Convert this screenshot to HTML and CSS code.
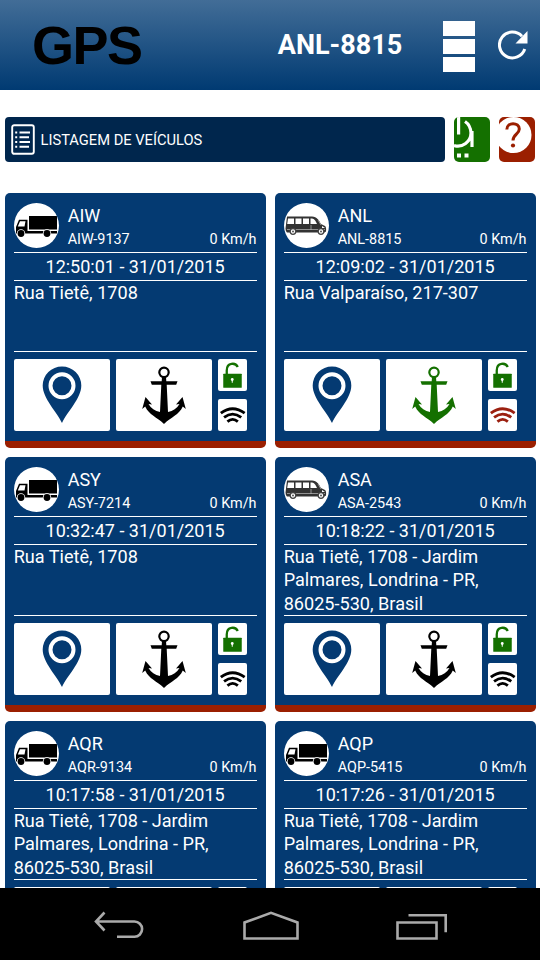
FILE: index.html
```html
<!DOCTYPE html>
<html lang="pt-BR">
<head>
<meta charset="utf-8">
<title>GPS</title>
<link rel="stylesheet" href="styles.css">
</head>
<body>
<svg class="sprites" aria-hidden="true">
  <symbol id="truck" viewBox="0 0 45 45">
    <path d="M15 13h28v13.500H15z"/>
    <path fill-rule="evenodd" d="M5 16.800h8.500V28H43v2.500H2V24zM6 18.300l-2.200 5.200h6.700l1-5.200z"/>
    <circle cx="7" cy="30.500" r="4.200" fill="#fff"/><circle cx="7" cy="30.500" r="3.400"/>
    <circle cx="33" cy="30.500" r="4.200" fill="#fff"/><circle cx="33" cy="30.500" r="3.400"/>
  </symbol>
  <symbol id="van" viewBox="0 0 45 45">
    <path fill="#333" d="M3 13.500h25c5 0 7 4 9 7.500l4 2q1.500 1 1 5.500l-1.500 1H3q-1.500-1-1.500-4z"/>
    <path fill="#fff" d="M4 15.500h6V21H3.200zM11.500 15.500h6V21h-6zM19 15.500h6V21h-6zM26.500 15.500c4 0 5 2 6.500 5.500h-6.500z"/>
    <path fill="none" stroke="#bbb" stroke-width=".7" d="M3 26.500h38M27 22v5M34 17l3 5"/>
    <path fill="#fff" d="M38 23l3 2h-3z"/>
    <g fill="#fff" stroke="#444" stroke-width="1.300"><circle cx="9" cy="28.500" r="2.800"/><circle cx="37" cy="28.500" r="2.800"/></g>
    <circle cx="9" cy="28.500" r="1" fill="#555"/><circle cx="37" cy="28.500" r="1" fill="#555"/>
  </symbol>
  <symbol id="pin" viewBox="0 0 40 58">
    <path d="M20 57C15 46 .7 32.500 .7 19.500a19.300 19 0 0 1 38.600 0C39.300 32.500 25 46 20 57z"/>
    <circle cx="20" cy="19.800" r="11.500" fill="none" stroke="#fff" stroke-width="4"/>
  </symbol>
  <symbol id="anchor" viewBox="0 0 44 58">
    <circle cx="22" cy="6.300" r="4.700" fill="none" stroke="currentColor" stroke-width="2.200"/>
    <path d="M20 11h4l.3 4.300H35.500l-1.300 3.500H24.700L26 46c5-1 9-3.500 11.500-8l-3.500 .5L40.500 31l3.300 12-3-2.500C37 49 29 51 22 58 15 51 7 49 3.200 40.500L.2 43 3.500 31l6.500 7.500-3.500-.5C9 42.500 13 45 18 46l1.300-27.200H9.800L8.500 15.300h11.200z"/>
  </symbol>
  <symbol id="lock" viewBox="0 0 29 32">
    <path fill="none" stroke="#147000" stroke-width="2.300" d="M8.500 16V11.500c0-8.500 9-8 11-3.500"/>
    <rect x="5" y="14.800" width="18.500" height="14" rx=".5" fill="#147000"/>
    <circle cx="14" cy="20.500" r="1.400" fill="#fff"/><path fill="#fff" d="M13.500 20.500h1v3.200h-1z"/>
  </symbol>
  <symbol id="wifi" viewBox="0 0 29 32">
    <g fill="none" stroke="currentColor" stroke-width="2.800"><path d="M2.600 14.200q11.700-9 23.800 0"/><path d="M5.800 18.400q8.500-6.500 17.200 0"/><path d="M9.200 22.600q5.200-4.500 10.400 0"/></g>
  </symbol>
</svg>
<div class="screen">
  <header class="topbar">
    <div class="logo">GPS</div>
    <div class="plate">ANL-8815</div>
    <div class="menu"><i></i><i></i><i></i></div>
    <svg class="reload" viewBox="0 0 30 30"><path fill="none" stroke="#fff" stroke-width="3" d="M26.800 19A13 12.900 0 1 1 24 6.200"/><path fill="#fff" d="M29.500 1v12.500H17.500z"/></svg>
  </header>
  <main class="content">
    <div class="toolbar">
      <div class="title">
        <svg viewBox="0 0 24 31"><rect x="1.200" y="1.200" width="21.600" height="28.600" rx="2" fill="none" stroke="#fff" stroke-width="1.900"/><path stroke="#fff" stroke-width="2" d="M4.200 8.500h2M8.500 8.500h10.500M4.200 13.200h2M8.500 13.200h9.500M4.200 18h2M8.500 18h10.500M4.200 22.700h2M8.500 22.700h9.500"/></svg>
        <span>LISTAGEM DE VEÍCULOS</span>
      </div>
      <div class="tool power"><svg viewBox="0 0 37 45"><path fill="none" stroke="#fff" stroke-width="3.200" d="M4.600 0v17.500M0 28.500A13.200 13.200 0 0 0 17 16Q16.500 8 11 4.500M18 14v16"/><path fill="#fff" d="M3 36.500h4v4H3zM10.500 36.500h4v4h-4z"/></svg></div>
      <div class="tool help"><svg viewBox="0 0 37 45"><circle cx="14.500" cy="18" r="18" fill="#fff"/><path fill="none" stroke="#9b1f00" stroke-width="3" d="M7.800 12.500c0-8 12.500-7.500 12.500-.5 0 5-6.300 5.500-6.300 11.500"/><circle cx="14" cy="28.500" r="2.100" fill="#9b1f00"/></svg></div>
    </div>
    <section class="grid">
      <article class="card">
        <div class="head"><svg class="avatar"><use href="#truck"/></svg><div class="ident"><div class="name">AIW</div><div class="sub"><span>AIW-9137</span><span>0 Km/h</span></div></div></div>
        <div class="time">12:50:01 - 31/01/2015</div>
        <div class="address">Rua Tietê, 1708</div>
        <div class="actions"><div class="big"><svg class="pin"><use href="#pin"/></svg></div><div class="big"><svg class="anchor"><use href="#anchor"/></svg></div><div class="small"><svg><use href="#lock"/></svg><svg><use href="#wifi"/></svg></div></div>
      </article>
      <article class="card">
        <div class="head"><svg class="avatar"><use href="#van"/></svg><div class="ident"><div class="name">ANL</div><div class="sub"><span>ANL-8815</span><span>0 Km/h</span></div></div></div>
        <div class="time">12:09:02 - 31/01/2015</div>
        <div class="address">Rua Valparaíso, 217-307</div>
        <div class="actions"><div class="big"><svg class="pin"><use href="#pin"/></svg></div><div class="big"><svg class="anchor green"><use href="#anchor"/></svg></div><div class="small"><svg><use href="#lock"/></svg><svg class="red"><use href="#wifi"/></svg></div></div>
      </article>
      <article class="card">
        <div class="head"><svg class="avatar"><use href="#truck"/></svg><div class="ident"><div class="name">ASY</div><div class="sub"><span>ASY-7214</span><span>0 Km/h</span></div></div></div>
        <div class="time">10:32:47 - 31/01/2015</div>
        <div class="address">Rua Tietê, 1708</div>
        <div class="actions"><div class="big"><svg class="pin"><use href="#pin"/></svg></div><div class="big"><svg class="anchor"><use href="#anchor"/></svg></div><div class="small"><svg><use href="#lock"/></svg><svg><use href="#wifi"/></svg></div></div>
      </article>
      <article class="card">
        <div class="head"><svg class="avatar"><use href="#van"/></svg><div class="ident"><div class="name">ASA</div><div class="sub"><span>ASA-2543</span><span>0 Km/h</span></div></div></div>
        <div class="time">10:18:22 - 31/01/2015</div>
        <div class="address">Rua Tietê, 1708 - Jardim<br>Palmares, Londrina - PR,<br>86025-530, Brasil</div>
        <div class="actions"><div class="big"><svg class="pin"><use href="#pin"/></svg></div><div class="big"><svg class="anchor"><use href="#anchor"/></svg></div><div class="small"><svg><use href="#lock"/></svg><svg><use href="#wifi"/></svg></div></div>
      </article>
      <article class="card">
        <div class="head"><svg class="avatar"><use href="#truck"/></svg><div class="ident"><div class="name">AQR</div><div class="sub"><span>AQR-9134</span><span>0 Km/h</span></div></div></div>
        <div class="time">10:17:58 - 31/01/2015</div>
        <div class="address">Rua Tietê, 1708 - Jardim<br>Palmares, Londrina - PR,<br>86025-530, Brasil</div>
        <div class="actions"><div class="big"></div><div class="big"></div><div class="small"><svg></svg></div></div>
      </article>
      <article class="card">
        <div class="head"><svg class="avatar"><use href="#truck"/></svg><div class="ident"><div class="name">AQP</div><div class="sub"><span>AQP-5415</span><span>0 Km/h</span></div></div></div>
        <div class="time">10:17:26 - 31/01/2015</div>
        <div class="address">Rua Tietê, 1708 - Jardim<br>Palmares, Londrina - PR,<br>86025-530, Brasil</div>
        <div class="actions"><div class="big"></div><div class="big"></div><div class="small"><svg></svg></div></div>
      </article>
    </section>
  </main>
  <nav class="navbar">
    <svg viewBox="0 0 52 30"><path d="M10.500 1.500L2 10.500l8.500 9M2 10.500h38.500a7.500 7.500 0 0 1 0 15.200H23"/></svg>
    <svg class="home" viewBox="0 0 56 30"><path d="M1.500 27.500V11.500L28 1.800l26.500 9.700v16z"/></svg>
    <svg viewBox="0 0 52 30"><path d="M1.500 11.500h39v16h-39zM12.500 4.300h37.200v17"/></svg>
  </nav>
</div>
</body>
</html>
```

FILE: styles.css
```css
* { box-sizing: border-box; }
body { margin: 0; background: #fff; font-family: Roboto, "Liberation Sans", sans-serif; color: #fff; }
.sprites { display: none; }
.screen { display: flex; flex-direction: column; width: 540px; height: 960px; overflow: hidden; }

.topbar { display: flex; flex: none; align-items: center; height: 90px; padding: 0 12px 0 32px; background: linear-gradient(#426d97, #003a72); }
.logo { width: 246px; padding-bottom: 1px; font: bold 54px/60px "Liberation Sans", sans-serif; letter-spacing: -1.5px; color: #000; }
.plate { width: 165px; font-size: 27px; font-weight: 700; white-space: nowrap; }
.menu { display: flex; flex-direction: column; gap: 3px; width: 32px; margin-top: 2px; }
.menu i { height: 15px; background: #fff; }
.reload { width: 30px; height: 30px; margin-left: 23.500px; }

.content { flex: 1; min-height: 0; overflow: hidden; padding: 27px 4.500px 0; }
.toolbar { display: flex; gap: 9px; height: 45px; }
.title { display: flex; align-items: center; width: 441px; padding-left: 6px; background: #00264d; border-radius: 4px; font-size: 14.700px; }
.title svg { width: 24px; height: 31px; margin-right: 6px; }
.tool { width: 36.500px; border-radius: 5px; overflow: hidden; }
.tool svg { display: block; width: 37px; height: 45px; }
.power { background: #147000; }
.help { background: #9b1f00; }

.grid { display: grid; grid-template-columns: 261px 261px; column-gap: 9px; row-gap: 9px; margin-top: 31.400px; }
.card { height: 255px; padding: 9.600px 9px 0 9.200px; background: #043a72; border-bottom: 7px solid #9b1f00; border-radius: 5px; }
.head { display: flex; gap: 9px; height: 50px; border-bottom: 1px solid #fff; }
.avatar { flex: none; width: 45px; height: 45px; border-radius: 50%; background: #fff; fill: #000; }
.ident { flex: 1; }
.name { padding-top: 1px; font-size: 18px; line-height: 23px; }
.sub { display: flex; justify-content: space-between; font-size: 14.400px; line-height: 25px; }
.time { height: 28px; border-bottom: 1px solid #fff; font-size: 18px; line-height: 28px; text-align: center; }
.address { height: 71px; border-bottom: 1px solid #fff; font-size: 18.100px; line-height: 23.300px; white-space: nowrap; }
.actions { display: flex; gap: 6px; padding-top: 7px; }
.big { display: flex; align-items: center; justify-content: center; width: 96px; height: 72px; background: #fff; border-radius: 2px; }
.pin { width: 40px; height: 58px; fill: #043a72; }
.anchor { width: 44px; height: 58px; }
.anchor, .small svg { color: #000; fill: currentColor; }
.small { display: flex; flex-direction: column; gap: 8px; }
.small svg { width: 29.500px; height: 32px; background: #fff; border-radius: 2px; }
.anchor.green { color: #147000; }
.small .red { color: #9b2010; }

.navbar { display: flex; flex: none; align-items: center; justify-content: space-between; height: 72px; padding: 3px 92px 0 94px; background: #000; }
.navbar svg { width: 52px; height: 30px; fill: none; stroke: #aaa; stroke-width: 2.600; }
.navbar .home { width: 56px; }
```
